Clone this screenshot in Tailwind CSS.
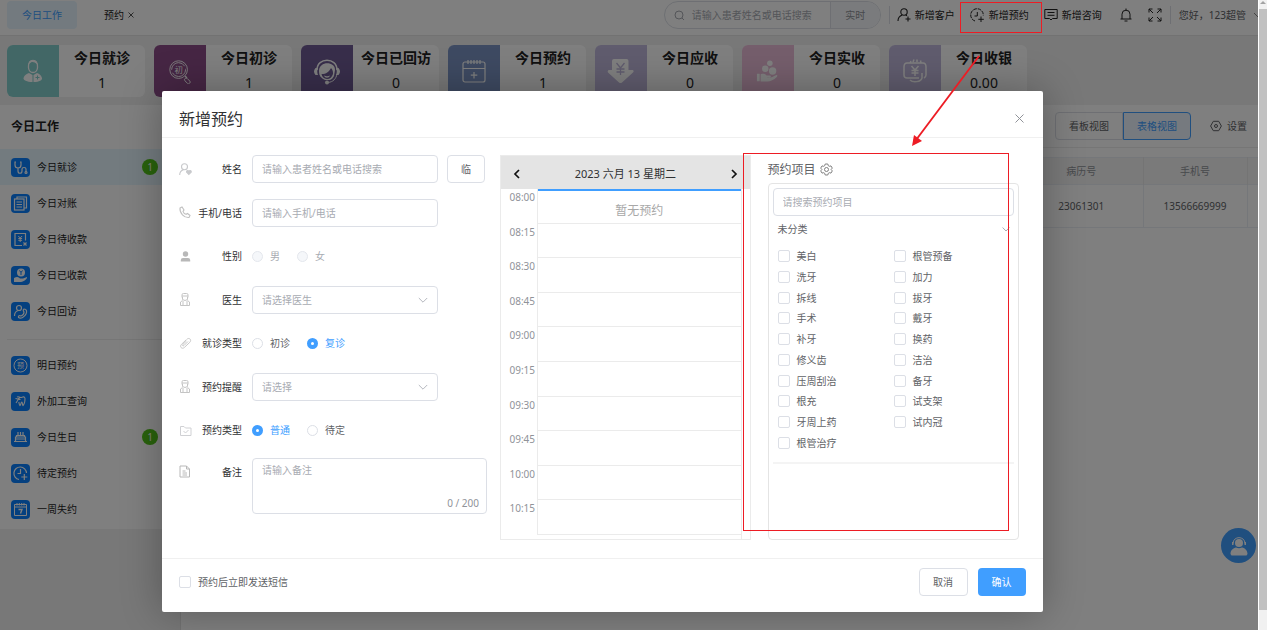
<!DOCTYPE html>
<html lang="zh-CN">
<head>
    <meta charset="UTF-8">
    <meta name="viewport" content="width=device-width, initial-scale=1.0">
    <title>今日工作</title>
    <script src="https://cdn.jsdelivr.net/npm/@tailwindcss/browser@4"></script>
</head>
<body class="font-['Noto_Sans','Noto_Sans_CJK_SC',sans-serif] text-[10px] leading-4 text-[#606266]">
<div class="relative flex h-screen overflow-hidden">

    <!-- Page -->
    <div class="relative flex min-w-0 flex-1 flex-col overflow-hidden bg-[#f0f0f0]">

        <!-- Top bar -->
        <header class="flex h-[36px] shrink-0 items-start justify-between border-b border-[#e4e4e4] bg-white pt-px pl-[7px]">
            <nav class="flex items-center">
                <a href="#" class="flex h-7 items-center rounded bg-[#e6f4ff] px-[15px] text-[#409eff]">今日工作</a>
                <a href="#" class="ml-[27px] flex items-center gap-1 text-[#222]">预约
                    <svg class="size-[6px]" viewBox="0 0 6 6" fill="none" stroke="#555"><path d="M.5.5l5 5M5.500.5l-5 5"/></svg>
                </a>
            </nav>
            <div class="flex h-7 items-center text-[#222]">
                <div class="flex h-7 w-[217px] items-center overflow-hidden rounded-full border border-[#dcdfe6]">
                    <svg class="ml-[9px] size-[11px] shrink-0" viewBox="0 0 11 11" fill="none" stroke="#a8abb2"><circle cx="5" cy="5" r="4"/><path d="M8 8l2 2"/></svg>
                    <input type="text" aria-label="搜索" placeholder="请输入患者姓名或电话搜索" class="ml-[7px] min-w-0 flex-1 outline-none placeholder:text-[#a8abb2]">
                    <button class="h-full w-[50px] border-l border-[#dcdfe6] bg-[#f5f7fa] text-[#909399]">实时</button>
                </div>
                <span class="ml-2 h-[18px] w-px bg-[#dcdfe6]"></span>
                <a href="#" class="ml-[7px] flex items-center gap-[4px]">
                    <svg class="size-[14px]" viewBox="0 0 14 14" fill="none" stroke="#222" stroke-width="1.1"><circle cx="7" cy="4" r="3.2"/><path d="M1 13c0-3.500 1.800-5 4.200-5.900M8.800 7l1.200.9M11 8.500v5M8.500 11h5"/></svg>
                    新增客户
                </a>
                <a href="#" class="ml-[15px] flex items-center gap-1">
                    <svg class="size-[15px]" viewBox="0 0 15 15" fill="none" stroke="#222"><path d="M5 13A6.300 6.300 0 1 1 13.300 7.500" stroke-dasharray="3.600 .9"/><path d="M7.300 4v4H4.500M11 8.500v5.500M8.300 11.300h5.500"/></svg>
                    新增预约
                </a>
                <a href="#" class="ml-[15px] flex items-center gap-1">
                    <svg class="size-[14px]" viewBox="0 0 14 14" fill="none" stroke="#222"><path d="M.8 1.500h12.400v9H8.500L7 12l-1.500-1.500H.8zM3.500 4.500h7M3.500 7.300h7"/></svg>
                    新增咨询
                </a>
                <button aria-label="通知" class="ml-[17px]">
                    <svg class="size-[14px]" viewBox="0 0 14 14" fill="none" stroke="#222"><path d="M1.500 11h11M3 11V6.200a4 4 0 0 1 8 0V11M7 .5v1.700M5.500 13h3"/></svg>
                </button>
                <button aria-label="全屏" class="ml-[15px]">
                    <svg class="size-[14px]" viewBox="0 0 14 14" fill="none" stroke="#222"><path d="M1 4.500V1h3.500M1 1l4 4M9.500 1H13v3.500M13 1L9 5M1 9.500V13h3.500M1 13l4-4M9.500 13H13V9.500M13 13L9 9"/></svg>
                </button>
                <span class="ml-2 h-[18px] w-px bg-[#dcdfe6]"></span>
                <a href="#" class="ml-2 flex items-center text-[#606266]">您好，123超管
                    <svg class="ml-2 h-2 w-[4px]" viewBox="0 0 4 8" fill="none" stroke="#888"><path d="M0 2l4 4"/></svg>
                </a>
            </div>
        </header>

        <!-- Daily numbers -->
        <section class="flex h-[69px] shrink-0 gap-[9px] pt-[9px] pl-[7px] text-center text-[14px] leading-[25px] text-[#222]">
            <div class="flex h-[52px] w-[138px] overflow-hidden rounded-md bg-white">
                <div class="flex w-[52px] items-center justify-center bg-[#84cecc]">
                    <svg class="size-[26px]" viewBox="0 0 26 26" fill="#fff"><path d="M8.500 8c-.5-7 9.500-7 9 0v2c-1 6-8 6-9 0z" fill="none" stroke="#fff" stroke-width="1.300"/><path d="M9 6c3-3 5-2 8 0V4c-2-3-6-3-8 0z"/><path d="M9 15l3.500 2V24C7 24 3 22 3.500 20c1-3 3-4 5.500-5zM17 15l-3.500 2V24c6 0 9-2 8.500-4-1-3-2.500-4-5-5z"/><path d="M17.500 17.500v4M15.500 19.500h4" stroke="#84cecc"/></svg>
                </div>
                <div class="flex-1"><h3 class="font-bold">今日就诊</h3><p>1</p></div>
            </div>
            <div class="flex h-[52px] w-[138px] overflow-hidden rounded-md bg-white">
                <div class="flex w-[52px] items-center justify-center bg-[#8c4c88]">
                    <svg class="size-[26px]" viewBox="0 0 28 28" fill="none" stroke="#fff"><circle cx="12.500" cy="12.500" r="9.500"/><circle cx="12.500" cy="12.500" r="7.500" stroke-dasharray="20 3"/><path d="M19.500 19.500l2 2" stroke-width="1.500"/><rect x="20" y="21.500" width="7" height="3.500" rx="1.500" transform="rotate(45 21 22)"/><text x="12.500" y="15.800" font-size="9" text-anchor="middle" fill="#fff" stroke="none">初</text></svg>
                </div>
                <div class="flex-1"><h3 class="font-bold">今日初诊</h3><p>1</p></div>
            </div>
            <div class="flex h-[52px] w-[138px] overflow-hidden rounded-md bg-white">
                <div class="flex w-[52px] items-center justify-center bg-[#705c96]">
                    <svg class="size-[28px]" viewBox="0 0 28 28" fill="#fff"><path d="M4 13C4 0 24 0 24 13" fill="none" stroke="#fff" stroke-width="1.500"/><path d="M4 11h-1.500c-2 2-2 5 0 7H5c-1-2-1-5 0-7zM24 11h1.500c2 2 2 5 0 7H23c1-2 1-5 0-7z"/><path d="M6 14C6 4 22 4 22 13l-1 6c-1 2-2 3-4 4h-5c-4-2-6-4-6-9z"/><path d="M8.500 17c5 0 7-2 9.500-6 2 2 2 4 2 6-1 3-3 5-6 5-3-.5-5-2-5.500-5z" fill="#705c96"/><path d="M11 18.500c2 1 4 1 6 0-1 3-5 3-6 0z"/><path d="M24 17c-1 5-4 8-9 8.500" fill="none" stroke="#fff"/><circle cx="14" cy="25.500" r="2"/></svg>
                </div>
                <div class="flex-1"><h3 class="font-bold">今日已回访</h3><p>0</p></div>
            </div>
            <div class="flex h-[52px] w-[138px] overflow-hidden rounded-md bg-white">
                <div class="flex w-[52px] items-center justify-center bg-[#7c94c4]">
                    <svg class="size-[26px]" viewBox="0 0 26 26" fill="none" stroke="#fff" stroke-width="1.200"><rect x="2" y="4" width="22" height="20" rx="2"/><path d="M2 10.500h22M7 2v4M10 2v4M13 2v4M16 2v4M19 2v4M13 14v6.500M9.800 17.200h6.500"/></svg>
                </div>
                <div class="flex-1"><h3 class="font-bold">今日预约</h3><p>1</p></div>
            </div>
            <div class="flex h-[52px] w-[138px] overflow-hidden rounded-md bg-white">
                <div class="flex w-[52px] items-center justify-center bg-[#c0b8dc]">
                    <svg class="size-[28px]" viewBox="0 0 28 28" fill="#fff"><path d="M7 2h12.500q2 0 2 2v9h4.500q1.500 1 0 2.500L15 25.500q-1.500 1-3 0L1 15.500q-1-1.500.5-2.500H5V4q0-2 2-2z"/><path d="M9.500 6l4 5 4-5M13.500 11v7M9.500 12h8M9.500 15h8" fill="none" stroke="#c0b8dc" stroke-width="1.300"/></svg>
                </div>
                <div class="flex-1"><h3 class="font-bold">今日应收</h3><p>0</p></div>
            </div>
            <div class="flex h-[52px] w-[138px] overflow-hidden rounded-md bg-white">
                <div class="flex w-[52px] items-center justify-center bg-[#eabcd8]">
                    <svg class="size-[24px]" viewBox="0 0 26 26" fill="#fff"><circle cx="15" cy="4.500" r="3"/><circle cx="10" cy="10.500" r="3.500"/><circle cx="18" cy="13" r="4"/><path d="M1 16h3v8H1zM5 16.500c3-1 5-.5 6.500 1.500h4c1.500 1 0 2-1 2h-3c4 1 7-1 10-2.500 2-.5 2 1 1 2-3 3-7 5-10 5H5z"/></svg>
                </div>
                <div class="flex-1"><h3 class="font-bold">今日实收</h3><p>0</p></div>
            </div>
            <div class="flex h-[52px] w-[138px] overflow-hidden rounded-md bg-white">
                <div class="flex w-[52px] items-center justify-center bg-[#c0b8dc]">
                    <svg class="size-[26px]" viewBox="0 0 26 26" fill="none" stroke="#fff" stroke-width="1.500"><path d="M17 20H5q-3 0-3-3V9q0-4 3-4h16q3 0 3 4v8q0 2-2 3M8 5l1-2M11 4l1-2.500M15 4V1.500M19 5l-.5-2.500M8 22c3 3 11 2 12-2v-5M9.500 8l3.500 4 3.500-4M13 12v6M9.500 12.500h7M9.500 15h7"/></svg>
                </div>
                <div class="flex-1"><h3 class="font-bold">今日收银</h3><p>0.00</p></div>
            </div>
        </section>

        <div class="flex min-h-0 flex-1 gap-2">
            <!-- Side menu -->
            <aside class="w-[172px] shrink-0 self-start bg-white pb-[2px] text-[#222]">
                <h2 class="flex h-[44px] items-center pl-[11px] text-[12px] font-bold">今日工作</h2>
                <a href="#" class="flex h-9 items-center gap-[7px] bg-[#e6f7ff] pr-[14px] pl-[11px]">
                    <svg class="size-[19px]" viewBox="0 0 19 19" fill="none" stroke="#fff" stroke-width="1.200"><rect width="19" height="19" rx="4" fill="#0a80ff" stroke="none"/><path d="M5 4H4v3c0 4 6 4 6 0V4H9M7 10v3c0 3 4 3 4 0v-2c0-2 4-2 4 0v3"/><circle cx="15" cy="14.500" r="1"/></svg>
                    今日就诊
                    <span class="ml-auto flex size-4 items-center justify-center rounded-full bg-[#52c41a] text-white">1</span>
                </a>
                <a href="#" class="flex h-9 items-center gap-[7px] pl-[11px]">
                    <svg class="size-[19px]" viewBox="0 0 19 19" fill="none" stroke="#fff" stroke-width="1.200"><rect width="19" height="19" rx="4" fill="#0a80ff" stroke="none"/><rect x="3.500" y="5" width="9.500" height="11"/><path d="M6 5V3h9.500v11H13M5.500 8h5.500M5.500 10.500h5.500M5.500 13h5.500"/></svg>
                    今日对账
                </a>
                <a href="#" class="flex h-9 items-center gap-[7px] pl-[11px]">
                    <svg class="size-[19px]" viewBox="0 0 19 19" fill="none" stroke="#fff" stroke-width="1.200"><rect width="19" height="19" rx="4" fill="#0a80ff" stroke="none"/><path d="M11 15.500H4v-12h10.500v7M12.500 12.500l3 3M15.500 12.500l-3 3"/><path d="M7.300 6l1.900 2 1.900-2M9.200 8v4M7.300 8.500h3.800M7.300 10.300h3.800" stroke-width="1"/></svg>
                    今日待收款
                </a>
                <a href="#" class="flex h-9 items-center gap-[7px] pl-[11px]">
                    <svg class="size-[19px]" viewBox="0 0 19 19"><rect width="19" height="19" rx="4" fill="#0a80ff"/><circle cx="10" cy="6.500" r="4" fill="#fff"/><path d="M8.500 4.500L10 6.500l1.500-2M10 6.500V9" stroke="#0a80ff" fill="none"/><path d="M3 12c3-2 5-1 6 .5h3L16 11c.5 2-3 4.500-6 5H3z" fill="#fff"/></svg>
                    今日已收款
                </a>
                <a href="#" class="flex h-9 items-center gap-[7px] pl-[11px]">
                    <svg class="size-[19px]" viewBox="0 0 19 19" fill="none" stroke="#fff" stroke-width="1.200"><rect width="19" height="19" rx="4" fill="#0a80ff" stroke="none"/><circle cx="8" cy="6" r="2.500"/><path d="M3.500 14c0-3 1.500-5 4-5.500M13 7c3 0 3 3 2 5-1.500 3-5 5-7.500 3.500-.5-1.500 1-2.500 2.500-1.500 1.500-.5 3-2.500 3-4-1-1-1-2.500 0-3z"/></svg>
                    今日回访
                </a>
                <hr class="mt-[10px] mb-[7px] ml-[7px] border-[#ececec]">
                <a href="#" class="flex h-9 items-center gap-[7px] pl-[11px]">
                    <svg class="size-[19px]" viewBox="0 0 19 19" fill="none" stroke="#fff"><rect width="19" height="19" rx="4" fill="#0a80ff" stroke="none"/><circle cx="9.500" cy="9.500" r="6.500"/><text x="9.500" y="12" font-size="7" text-anchor="middle" fill="#fff" stroke="none">预</text></svg>
                    明日预约
                </a>
                <a href="#" class="flex h-9 items-center gap-[7px] pl-[11px]">
                    <svg class="size-[19px]" viewBox="0 0 19 19" fill="none" stroke="#fff" stroke-width="1.100"><rect width="19" height="19" rx="4" fill="#0a80ff" stroke="none"/><path d="M6 5c2-1 3 .5 4 .5s3.500-2 4 1c0 3-1 6-2 7-1-1-.3-3.500-1.200-3.500s-.8 3-1.800 3.500c-1-1-.8-2-1.200-3.500M4.500 6.500l5 1M8.500 5.500L5 11"/></svg>
                    外加工查询
                </a>
                <a href="#" class="flex h-9 items-center gap-[7px] pr-[14px] pl-[11px]">
                    <svg class="size-[19px]" viewBox="0 0 19 19" fill="none" stroke="#fff" stroke-width="1.200"><rect width="19" height="19" rx="4" fill="#0a80ff" stroke="none"/><path d="M3 13.500h13M4.500 13V9h10v4M5.500 9V7.500h8V9M7 7V4M9.500 7V4M12 7V4M5 11h9"/></svg>
                    今日生日
                    <span class="ml-auto flex size-4 items-center justify-center rounded-full bg-[#52c41a] text-white">1</span>
                </a>
                <a href="#" class="flex h-9 items-center gap-[7px] pl-[11px]">
                    <svg class="size-[19px]" viewBox="0 0 19 19" fill="none" stroke="#fff" stroke-width="1.200"><rect width="19" height="19" rx="4" fill="#0a80ff" stroke="none"/><path d="M8 15.500A6.300 6.300 0 1 1 15.500 9M9.500 5v4.500H6.500M13.300 10v6M10.300 13h6"/></svg>
                    待定预约
                </a>
                <a href="#" class="flex h-9 items-center gap-[7px] pl-[11px]">
                    <svg class="size-[19px]" viewBox="0 0 19 19" fill="none" stroke="#fff"><rect width="19" height="19" rx="4" fill="#0a80ff" stroke="none"/><path d="M3.500 4.500h12v11h-12zM3.500 7h12M6 3v2.500M8.300 3v2.500M10.700 3v2.500M13 3v2.500"/><path d="M7.500 9.500H11L9.500 13.500" stroke-width="1.400"/></svg>
                    一周失约
                </a>
            </aside>

            <!-- Work list -->
            <main class="relative min-w-0 flex-1 border-l border-[#e4e4e4] bg-white">
                <div class="flex h-[43px] items-center justify-end border-b border-[#ececec] pr-[11px]">
                    <button class="h-7 w-[68px] rounded-l border border-[#dcdfe6]">看板视图</button>
                    <button class="h-7 w-[68px] rounded-r border border-[#409eff] bg-[#ecf5ff] text-[#409eff]">表格视图</button>
                    <button class="ml-[19px] flex items-center gap-[5px]">
                        <svg class="size-3" viewBox="0 0 12 12" fill="none" stroke="#606266"><path d="M3.300 1.300h5.400L11.400 6l-2.700 4.700H3.300L.6 6z"/><circle cx="6" cy="6" r="1.500"/></svg>
                        设置
                    </button>
                </div>
                <table class="mt-[9px] w-full table-fixed border-y border-[#ebeef5] text-center">
                    <thead>
                        <tr class="h-[27px] bg-[#f5f5f5] text-[#909399]">
                            <th></th>
                            <th class="w-[123px] border-r border-[#e8e8e8] font-normal">病历号</th>
                            <th class="w-[104px] border-r border-[#e8e8e8] font-normal">手机号</th>
                            <th class="w-[11px]"></th>
                        </tr>
                    </thead>
                    <tbody>
                        <tr class="h-[43px] border-t border-[#ebeef5]">
                            <td></td>
                            <td class="border-r border-[#ebeef5]">23061301</td>
                            <td class="border-r border-[#ebeef5]">13566669999</td>
                            <td></td>
                        </tr>
                    </tbody>
                </table>
                <button aria-label="客服" class="absolute right-[2px] bottom-[67px] flex size-[35px] items-center justify-center rounded-full bg-[#409eff]">
                    <svg class="size-[20px]" viewBox="0 0 20 20" fill="#fff"><circle cx="10" cy="7" r="4"/><path d="M4 7.500C4-.3 16-.3 16 7.500" fill="none" stroke="#fff"/><path d="M3 6h1.500v3H3zM15.500 6H17v3h-1.500zM1.500 18c0-4 3-6 5.500-6.500 2 1 4 1 6 0 3 .5 5.500 3 5.500 6.500l-1 1.500h-15z"/></svg>
                </button>
            </main>
        </div>

        <!-- Mask and dialog -->
        <div class="absolute inset-0 bg-black/50">
            <div role="dialog" aria-labelledby="dialog-title" class="mt-[91px] ml-[162px] w-[70%] rounded-[2px] bg-white shadow-[0_0_40px_rgba(0,0,0,0.3)]">
                <div class="flex h-[47px] items-center justify-between border-b border-[#f0f0f0] pt-2 pr-[18px] pl-[17px]">
                    <h1 id="dialog-title" class="pt-px text-[16px] leading-6 text-[#303133]">新增预约</h1>
                    <button aria-label="关闭">
                        <svg class="size-[11px]" viewBox="0 0 11 11" fill="none" stroke="#909399"><path d="M1.500 1.500l8 8M9.500 1.500l-8 8"/></svg>
                    </button>
                </div>

                <div class="flex h-[421px] border-b border-[#f0f0f0] px-[17px] pt-[17px]">
                    <!-- Form -->
                    <form class="w-[308px] shrink-0 text-[#303133]">
                        <div class="flex h-[289px] flex-col justify-between">
                            <div class="flex h-7 items-center">
                                <svg class="size-[13px]" viewBox="0 0 13 13" fill="none" stroke="#c8c9cc" stroke-width="1.100"><circle cx="5.500" cy="3.800" r="3"/><path d="M.7 12c0-3 1.500-4.500 3.800-5.200"/><path d="M9.800 11.500L7.500 9c0-2 2-1.500 2.300-.7C10.200 7.500 12.300 7 12.300 9z" fill="#c8c9cc"/></svg>
                                <label for="name" class="mr-[10px] ml-auto">姓名</label>
                                <input id="name" type="text" placeholder="请输入患者姓名或电话搜索" class="h-7 w-[186px] rounded border border-[#dcdfe6] px-[9px] outline-none placeholder:text-[#a8abb2]">
                                <button type="button" class="mr-[2px] ml-[9px] h-7 w-[38px] rounded border border-[#dcdfe6] text-[#606266]">临</button>
                            </div>
                            <div class="flex h-7 items-center">
                                <svg class="size-[13px]" viewBox="0 0 13 13" fill="none" stroke="#c0c0c0" stroke-width="1.100"><path d="M1 2l2-1 2 3-1 1.300c.5 1.500 1.500 2.500 3 3L8.500 7.500l2.500 2-1 2C5 12 .5 7 1 2z"/></svg>
                                <label for="phone" class="mr-[10px] ml-auto">手机/电话</label>
                                <input id="phone" type="text" placeholder="请输入手机/电话" class="mr-[49px] h-7 w-[186px] rounded border border-[#dcdfe6] px-[9px] outline-none placeholder:text-[#a8abb2]">
                            </div>
                            <div class="flex h-7 items-center">
                                <svg class="size-[13px]" viewBox="0 0 13 13" fill="#b8b8b8"><circle cx="6.500" cy="4" r="2.700"/><path d="M1.800 11.500V10Q1.800 8 4 8h5q2.200 0 2.200 2v1.500z"/></svg>
                                <span class="mr-[10px] ml-auto">性别</span>
                                <div class="flex w-[235px] gap-[17px] text-[#a8abb2]">
                                    <label class="flex items-center gap-[7px]"><input type="radio" name="sex" disabled class="size-[11px] appearance-none rounded-full border border-[#e4e7ed] bg-[#f5f7fa]">男</label>
                                    <label class="flex items-center gap-[7px]"><input type="radio" name="sex" disabled class="size-[11px] appearance-none rounded-full border border-[#e4e7ed] bg-[#f5f7fa]">女</label>
                                </div>
                            </div>
                            <div class="flex h-7 items-center">
                                <svg class="size-[13px]" viewBox="0 0 13 13" fill="none" stroke="#c4c4c4"><path d="M3 4.500V1.800Q3 .5 4.500.5h3Q9 .5 9 1.800v2.700M3 3h6M3.500 4v2.500q2.500 2 5 0V4M3.500 7.500l-2 1.500v3.500h9V9l-2-1.500M4 8v4.500M8 8v4.500"/></svg>
                                <label for="doctor" class="mr-[10px] ml-auto">医生</label>
                                <div class="relative mr-[49px] w-[186px]">
                                    <select id="doctor" class="h-7 w-full appearance-none rounded border border-[#dcdfe6] px-[9px] text-[#a8abb2] outline-none"><option>请选择医生</option></select>
                                    <svg class="pointer-events-none absolute top-[9px] right-[10px] size-[10px]" viewBox="0 0 10 10" fill="none" stroke="#b4b7be"><path d="M.8 3L5 7.200 9.200 3"/></svg>
                                </div>
                            </div>
                            <div class="flex h-7 items-center">
                                <svg class="size-[13px]" viewBox="0 0 13 13" fill="none" stroke="#c8c8c8"><path d="M7.500 2.500L2.500 7.300c-2.500 2.700.8 5.200 2.800 3.200l5.500-5.200c2.300-2.600-.7-5-2.700-3.200M9 4.500L5 8.500c-1 1-2-.2-1.200-1L7.500 4"/></svg>
                                <span class="mr-[10px] ml-auto">就诊类型</span>
                                <div class="flex w-[235px] gap-[17px] text-[#606266]">
                                    <label class="flex items-center gap-[7px]"><input type="radio" name="visit" class="size-[11px] appearance-none rounded-full border border-[#dcdfe6]">初诊</label>
                                    <label class="flex items-center gap-[7px] text-[#409eff]"><input type="radio" name="visit" checked class="size-[11px] appearance-none rounded-full border-4 border-[#409eff] bg-white">复诊</label>
                                </div>
                            </div>
                            <div class="flex h-7 items-center">
                                <svg class="size-[13px]" viewBox="0 0 13 13" fill="none" stroke="#c4c4c4"><path d="M3 4.500V1.800Q3 .5 4.500.5h3Q9 .5 9 1.800v2.700M3 3h6M3.500 4v2.500q2.500 2 5 0V4M3.500 7.500l-2 1.500v3.500h9V9l-2-1.500M4 8v4.500M8 8v4.500"/></svg>
                                <label for="remind" class="mr-[10px] ml-auto">预约提醒</label>
                                <div class="relative mr-[49px] w-[186px]">
                                    <select id="remind" class="h-7 w-full appearance-none rounded border border-[#dcdfe6] px-[9px] text-[#a8abb2] outline-none"><option>请选择</option></select>
                                    <svg class="pointer-events-none absolute top-[9px] right-[10px] size-[10px]" viewBox="0 0 10 10" fill="none" stroke="#b4b7be"><path d="M.8 3L5 7.200 9.200 3"/></svg>
                                </div>
                            </div>
                            <div class="flex h-7 items-center">
                                <svg class="size-[13px]" viewBox="0 0 13 13" fill="none" stroke="#d0d1d4"><path d="M1.500 2.500H5L6.500 4h5.500v7.500H1.500zM4.500 7l2 2 3-3"/></svg>
                                <span class="mr-[10px] ml-auto">预约类型</span>
                                <div class="flex w-[235px] gap-[17px] text-[#606266]">
                                    <label class="flex items-center gap-[7px] text-[#409eff]"><input type="radio" name="kind" checked class="size-[11px] appearance-none rounded-full border-4 border-[#409eff] bg-white">普通</label>
                                    <label class="flex items-center gap-[7px]"><input type="radio" name="kind" class="size-[11px] appearance-none rounded-full border border-[#dcdfe6]">待定</label>
                                </div>
                            </div>
                        </div>
                        <div class="mt-[14px] flex items-start">
                            <svg class="mt-[7px] size-[13px]" viewBox="0 0 13 13" fill="none" stroke="#b8b8b8"><path d="M1 1h6.500l3 3v8H1zM7.500 1v3h3M3.500 6h3M3.500 8h4.500M3.500 10h4.500"/></svg>
                            <label for="note" class="mt-[6px] mr-[10px] ml-auto">备注</label>
                            <div class="relative w-[235px]">
                                <textarea id="note" placeholder="请输入备注" class="block h-14 w-full resize-none rounded border border-[#dcdfe6] px-[9px] py-[3px] outline-none placeholder:text-[#a8abb2]"></textarea>
                                <span class="absolute right-2 bottom-[3px] text-[#909399]">0 / 200</span>
                            </div>
                        </div>
                    </form>

                    <!-- Schedule -->
                    <div class="ml-[13px] flex h-[385px] min-w-0 flex-1 flex-col overflow-hidden border border-[#ebebeb]">
                        <div class="flex h-[33px] shrink-0 items-center justify-between bg-[#e4e4e4] px-[11px] pt-[2px] text-[11px] text-[#303133]">
                            <button aria-label="前一天"><svg class="size-[10px]" viewBox="0 0 10 10" fill="none" stroke="#111" stroke-width="1.700"><path d="M7 1L3 5l4 4"/></svg></button>
                            <span>2023 六月 13 星期二</span>
                            <button aria-label="后一天"><svg class="size-[10px]" viewBox="0 0 10 10" fill="none" stroke="#111" stroke-width="1.700"><path d="M3 1l4 4-4 4"/></svg></button>
                        </div>
                        <div class="flex min-h-0 flex-1">
                            <div id="times" class="grid h-[346px] w-[37px] shrink-0 grid-rows-10 border-r border-[#ebebeb] pr-[2px] text-right text-[#909399]"></div>
                            <div class="mr-2 min-w-0 flex-1 border-r border-[#ebebeb]">
                                <div id="slots" class="grid h-[346px] grid-rows-10">
                                    <div class="flex items-center justify-center border-t-2 border-b border-t-[#409eff] border-b-[#ebebeb] pt-[8px] text-[12px] text-[#a8a8a8]">暂无预约</div>
                                </div>
                            </div>
                        </div>
                    </div>

                    <!-- Items -->
                    <div class="mr-[7px] ml-[17px] flex h-[385px] w-[251px] shrink-0 flex-col">
                        <h2 class="flex h-7 items-center gap-1 pt-px text-[12px]">预约项目
                            <svg class="size-[13px]" viewBox="0 0 13 13" fill="none" stroke="#808080"><path d="M5.200 1h2.600l.5 1.700 1 .6 1.700-.4 1.300 2.200L11.100 6.500l1.200 1.400L11 10.100l-1.700-.4-1 .6-.5 1.700H5.200l-.5-1.700-1-.6-1.700.4L.7 7.900l1.200-1.400L.7 5.100 2 2.900l1.700.4 1-.6z"/><circle cx="6.500" cy="6.500" r="2"/></svg>
                        </h2>
                        <div class="flex-1 rounded border border-[#e4e4e4] px-1 pt-[4px]">
                            <input type="text" aria-label="搜索预约项目" placeholder="请搜索预约项目" class="block h-7 w-full rounded border border-[#dcdfe6] px-[9px] outline-none placeholder:text-[#a8abb2]">
                            <button class="mt-[5px] flex w-full items-center justify-between pr-1 pl-[5px]">未分类
                                <svg class="size-[8px]" viewBox="0 0 8 8" fill="none" stroke="#a8abb2"><path d="M.6 2.500L4 6l3.400-3.500"/></svg>
                            </button>
                            <div class="mt-[9px] flex h-[218px] border-b-2 border-[#f4f4f4] pb-[9px] pl-[5px]">
                                <div id="items-left" class="grid w-[116px] grid-rows-10 items-center"></div>
                                <div id="items-right" class="grid flex-1 grid-rows-10 items-center"></div>
                            </div>
                        </div>
                    </div>
                </div>

                <div class="flex h-[53px] items-center gap-[10px] pr-[17px] pb-2 pl-[17px]">
                    <label class="mr-auto flex items-center gap-[7px]"><input type="checkbox" class="size-3 appearance-none rounded-[2px] border border-[#dcdfe6]">预约后立即发送短信</label>
                    <button class="h-7 w-[49px] rounded border border-[#dcdfe6]">取消</button>
                    <button class="h-7 w-[48px] rounded bg-[#409eff] text-white">确认</button>
                </div>
            </div>
        </div>
    </div>

    <!-- Scroll bar -->
    <div class="flex w-[9px] shrink-0 flex-col border-l border-white bg-[#f1f1f1]">
        <svg class="h-[9px] w-2" viewBox="0 0 8 9" fill="#a3a3a3"><path d="M1 4l3-3 3 3z"/></svg>
        <div class="mb-[20px] flex-1 bg-[#c1c1c1]"></div>
    </div>

    <!-- Callouts -->
    <div class="pointer-events-none absolute top-[2px] left-[960px] h-[31px] w-[82px] border border-[#ed1c24]"></div>
    <div class="pointer-events-none absolute top-[153px] left-[743px] h-[378px] w-[266px] border border-[#ed1c24]"></div>
    <svg class="pointer-events-none absolute top-[50px] left-[900px] h-[100px] w-[90px]" viewBox="0 0 90 100" fill="#ed1c24"><path d="M79 6L16 90" stroke="#ed1c24" stroke-width="1.800"/><path d="M12 96l2-11 8 6z"/></svg>
</div>

<script>
    const times = ["08:00", "08:15", "08:30", "08:45", "09:00", "09:15", "09:30", "09:45", "10:00", "10:15"];
    const left = ["美白", "洗牙", "拆线", "手术", "补牙", "修义齿", "压周刮治", "根充", "牙周上药", "根管治疗"];
    const right = ["根管预备", "加力", "拔牙", "戴牙", "换药", "洁治", "备牙", "试支架", "试内冠"];

    const item = name => `<label class="flex items-center gap-[7px]"><input type="checkbox" class="size-3 appearance-none rounded-[2px] border border-[#dcdfe6]">${name}</label>`;

    document.getElementById("times").innerHTML = times.map(t => `<time>${t}</time>`).join("");
    document.getElementById("slots").innerHTML += times.slice(1).map(() => `<div class="border-b border-[#ebebeb]"></div>`).join("");
    document.getElementById("items-left").innerHTML = left.map(item).join("");
    document.getElementById("items-right").innerHTML = right.map(item).join("");
</script>
</body>
</html>
